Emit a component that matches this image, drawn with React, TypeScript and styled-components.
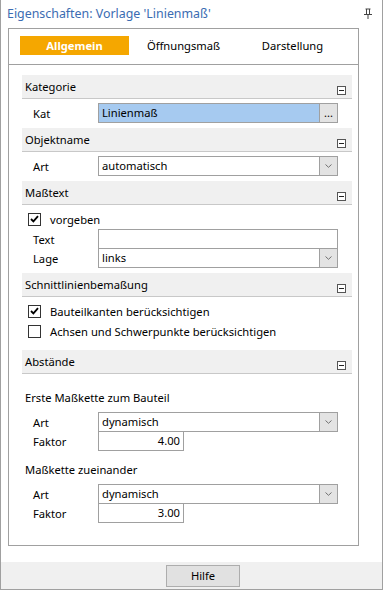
import React from 'react'
import styled, { createGlobalStyle } from 'styled-components'

const GlobalStyle = createGlobalStyle`
  html, body {
    margin: 0;
    padding: 0;
    background: #ffffff;
  }
  body {
    font-family: 'Noto Sans', 'Open Sans', sans-serif;
    font-size: 11.2px;
    color: #000000;
  }
`

const tabs = ['Allgemein', 'Öffnungsmaß', 'Darstellung']

const PinIcon: React.FC = () => (
  <svg width='8' height='11' viewBox='0 0 8 11'>
    <rect x='1.5' y='0.5' width='5' height='1' fill='#444' />
    <rect x='2' y='1' width='1' height='5' fill='#444' />
    <rect x='5' y='1' width='1' height='5' fill='#444' />
    <rect x='0' y='6' width='8' height='1' fill='#444' />
    <rect x='3.5' y='7' width='1' height='4' fill='#444' />
  </svg>
)

const Chevron: React.FC = () => (
  <svg width='7' height='4' viewBox='0 0 7 4'>
    <path d='M0.5 0.5 L3.5 3.3 L6.5 0.5' fill='none' stroke='#707070' strokeWidth='1' />
  </svg>
)

const CheckMark: React.FC = () => (
  <svg width='9' height='8' viewBox='0 0 9 8'>
    <path d='M1 4 L3.4 6.4 L8 1.2' fill='none' stroke='#000' strokeWidth='1.8' />
  </svg>
)

const SectionHeader: React.FC<{ title: string }> = ({ title }) => (
  <Header>
    <span>{title}</span>
    <Collapse />
  </Header>
)

const Combo: React.FC<{ value: string }> = ({ value }) => (
  <Field>
    <FieldText>{value}</FieldText>
    <SideButton>
      <Chevron />
    </SideButton>
  </Field>
)

const CheckRow: React.FC<{ label: string; checked?: boolean }> = ({ label, checked }) => (
  <CheckLine>
    <Box>{checked && <CheckMark />}</Box>
    {label}
  </CheckLine>
)

const App: React.FC = () => {
  return (
    <>
      <GlobalStyle />
      <Window>
        <TitleBar>
          <Title>Eigenschaften: Vorlage &apos;Linienmaß&apos;</Title>
          <PinIcon />
        </TitleBar>
        <Panel>
          <TabBar>
            {tabs.map((t, i) => (
              <Tab key={t} active={i === 0}>
                {t}
              </Tab>
            ))}
          </TabBar>
          <Content>
            <SectionHeader title='Kategorie' />
            <Section>
              <Row>
                <Label>Kat</Label>
                <Field selected>
                  <FieldText>Linienmaß</FieldText>
                  <SideButton>...</SideButton>
                </Field>
              </Row>
            </Section>

            <SectionHeader title='Objektname' />
            <Section>
              <Row>
                <Label>Art</Label>
                <Combo value='automatisch' />
              </Row>
            </Section>

            <SectionHeader title='Maßtext' />
            <Section>
              <CheckRow label='vorgeben' checked />
              <Row>
                <Label>Text</Label>
                <Field />
              </Row>
              <Row>
                <Label>Lage</Label>
                <Combo value='links' />
              </Row>
            </Section>

            <SectionHeader title='Schnittlinienbemaßung' />
            <Section bottom={9}>
              <CheckRow label='Bauteilkanten berücksichtigen' checked />
              <CheckRow label='Achsen und Schwerpunkte berücksichtigen' />
            </Section>

            <SectionHeader title='Abstände' />
            <Section>
              <Group>
                <GroupTitle>Erste Maßkette zum Bauteil</GroupTitle>
                <Row>
                  <Label>Art</Label>
                  <Combo value='dynamisch' />
                </Row>
                <Row>
                  <Label>Faktor</Label>
                  <NumberField>4.00</NumberField>
                </Row>
              </Group>
              <Group>
                <GroupTitle>Maßkette zueinander</GroupTitle>
                <Row>
                  <Label>Art</Label>
                  <Combo value='dynamisch' />
                </Row>
                <Row>
                  <Label>Faktor</Label>
                  <NumberField>3.00</NumberField>
                </Row>
              </Group>
            </Section>
          </Content>
        </Panel>
        <Footer>
          <Button>Hilfe</Button>
        </Footer>
      </Window>
    </>
  )
}

export default App

const Window = styled.div`
  width: 383px;
  height: 590px;
  box-sizing: border-box;
  border: 1px solid #a0a0a0;
  border-top: none;
  display: flex;
  flex-direction: column;
  background: #ffffff;
`
const TitleBar = styled.div`
  height: 27px;
  display: flex;
  align-items: center;
  justify-content: space-between;
  padding: 0 10px 1px 6px;
`
const Title = styled.div`
  font-size: 12.4px;
  color: #3b6cb2;
`
const Panel = styled.div`
  margin-left: 7px;
  width: 351px;
  height: 518px;
  box-sizing: border-box;
  border: 1px solid #a0a0a0;
  display: flex;
  flex-direction: column;
`
const TabBar = styled.div`
  height: 36px;
  box-sizing: border-box;
  border-bottom: 1px solid #a0a0a0;
  display: flex;
  padding: 7px 0 0 11px;
`
const Tab = styled.div<{ active?: boolean }>`
  width: 109px;
  height: 19px;
  display: flex;
  align-items: center;
  justify-content: center;
  background: ${(p) => (p.active ? '#f5a700' : 'transparent')};
  color: ${(p) => (p.active ? '#ffffff' : '#000000')};
  font-weight: ${(p) => (p.active ? 700 : 400)};
`
const Content = styled.div`
  padding: 10px 6px 0 13px;
`
const Header = styled.div`
  height: 24px;
  box-sizing: border-box;
  background: #f0f0f0;
  border-bottom: 1px solid #c8c8c8;
  display: flex;
  justify-content: space-between;
  padding: 0 6px 0 3px;
  > span {
    line-height: 23px;
  }
`
const Collapse = styled.div`
  align-self: flex-end;
  margin-bottom: 3px;
  width: 9px;
  height: 9px;
  box-sizing: border-box;
  border: 1px solid #555555;
  background: #ffffff;
  position: relative;
  &::after {
    content: '';
    position: absolute;
    left: 1px;
    right: 1px;
    top: 3px;
    height: 1px;
    background: #222222;
  }
`
const Section = styled.div<{ bottom?: number }>`
  padding: 4px 14px ${(p) => p.bottom ?? 5}px 6px;
  display: flex;
  flex-direction: column;
`
const Row = styled.div`
  display: flex;
  align-items: center;
  height: 20px;
  & + & {
    margin-top: -1px;
  }
`
const Label = styled.div`
  width: 65px;
  padding-left: 5px;
  flex-shrink: 0;
`
const Field = styled.div<{ selected?: boolean }>`
  flex: 1;
  height: 20px;
  box-sizing: border-box;
  border: 1px solid #a0a0a0;
  background: ${(p) => (p.selected ? '#a6caf0' : '#ffffff')};
  display: flex;
`
const FieldText = styled.div`
  flex: 1;
  padding-left: 3px;
  line-height: 18px;
`
const SideButton = styled.div`
  width: 17px;
  border-left: 1px solid #a0a0a0;
  background: #e3e3e3;
  display: flex;
  align-items: center;
  justify-content: center;
  font-size: 11px;
  line-height: 18px;
`
const NumberField = styled.div`
  width: 86px;
  height: 20px;
  box-sizing: border-box;
  border: 1px solid #a0a0a0;
  text-align: right;
  padding-right: 3px;
  line-height: 18px;
`
const CheckLine = styled.div`
  height: 18px;
  display: flex;
  align-items: center;
  gap: 9px;
  margin: 1px 0;
`
const Box = styled.div`
  width: 13px;
  height: 13px;
  box-sizing: border-box;
  border: 1px solid #333333;
  background: #ffffff;
  display: flex;
  align-items: center;
  justify-content: center;
`
const Group = styled.div`
  margin-top: 5px;
  &:first-child {
    margin-top: 6px;
  }
`
const GroupTitle = styled.div`
  height: 28px;
  line-height: 28px;
  margin-left: -3px;
`
const Footer = styled.div`
  margin-top: auto;
  height: 27px;
  background: #f0f0f0;
  display: flex;
  align-items: center;
  padding-left: 165px;
`
const Button = styled.div`
  width: 74px;
  height: 22px;
  box-sizing: border-box;
  border: 1px solid #adadad;
  background: #e1e1e1;
  display: flex;
  align-items: center;
  justify-content: center;
`
